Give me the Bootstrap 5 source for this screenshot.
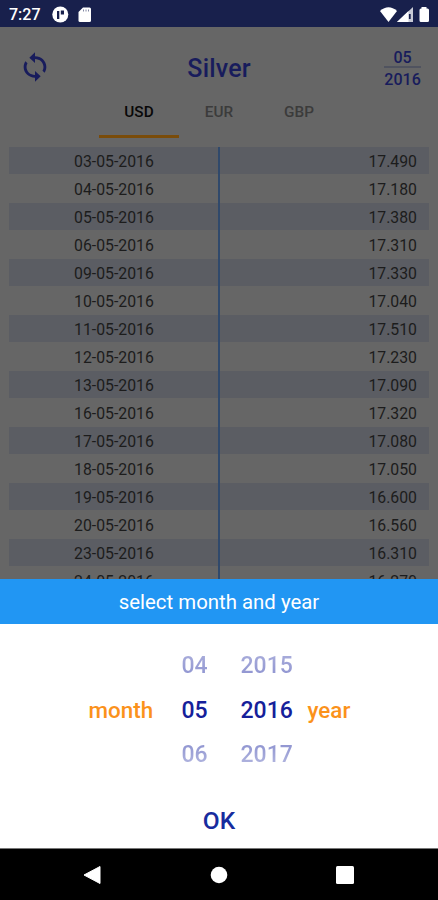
<!DOCTYPE html>
<html lang="en">
<head>
<meta charset="utf-8">
<meta name="viewport" content="width=device-width, initial-scale=1">
<title>Silver</title>
<link href="https://cdn.jsdelivr.net/npm/bootstrap@5.3.0/dist/css/bootstrap.min.css" rel="stylesheet">
<style>
body{font-family:Roboto,sans-serif;background:#666;height:900px;width:438px;line-height:1;color:#1c1c1c}
svg{display:block;flex:none}
.statusbar{height:27px;background:#18204c;color:#fff;font-size:16px;font-weight:500;padding:2px 8px 0 9px}
.statusbar .clock{width:43px}
.appbar{height:75px;padding:8px 17px 0 18px;color:#181c5c}
.side{width:40px}
.app-title{font-size:25px;font-weight:500;letter-spacing:.2px;padding:21px 4px 0 0}
.period{font-size:16px;font-weight:500;letter-spacing:.1px;padding-top:14px}
.period .top-part{border-bottom:2px solid #50535f;height:19px;line-height:17px}
.period .low-part{height:22px;line-height:24px}
.tabs{height:36px;padding-left:99px}
.tab-item{width:80px;font-size:15.3px;font-weight:500;color:#3b3b3b;line-height:21px;border-bottom:3px solid transparent}
.tab-item.current{color:#080808;border-color:#7a4c0a}
.rates{height:441px;padding:9px 9px 0}
.rate{height:28px;font-size:15.8px;line-height:29px}
.rate:nth-child(odd){background:linear-gradient(#5b5d63 27px,#666 27px)}
.rate .day{width:211px;border-right:2px solid #30496b;padding-left:1px}
.rate .price{padding-right:12px}
.sheet{height:269px}
.sheet-head{height:45px;background:#2196f3;font-size:20.4px;line-height:47px}
.picker{height:180px;font-size:23px;font-weight:500;color:#15209a;padding:19px 0 0 88.500px}
.picker .cap{color:#fb921b;font-size:22.4px}
.grid-pick{display:grid;grid-template-columns:93px 59px 67px 60px;grid-template-rows:45px 44px 45px;align-items:center}
.grid-pick .faded{color:transparent;background:linear-gradient(#a9addb,#8e93d0);-webkit-background-clip:text;background-clip:text}
.grid-pick .faded.below{background:linear-gradient(#8e93d0,#b4b8e0);-webkit-background-clip:text;background-clip:text}
.ok{height:44px;color:#172c9e;font-size:24.5px;font-weight:500;padding-top:5px}
.navkeys{height:52px;border-top:1px solid #777;padding:0 84px 0 83px}
</style>
</head>
<body class="d-flex flex-column overflow-hidden m-0">
<header class="statusbar d-flex align-items-center flex-shrink-0">
  <span class="clock">7:27</span>
  <svg width="18" height="18" viewBox="0 0 18 18"><circle cx="8.3" cy="8.500" r="8" fill="#fff"/><path d="M5 5H7.300V13H5z" fill="#18204c"/><path d="M8.800 4.500H12V8.500H8.800z" fill="#18204c"/></svg>
  <svg class="ms-2" width="14" height="17" viewBox="0 0 14 17"><path d="M5 1.500h6.500Q13 1.500 13 3V14.500Q13 16 11.500 16H2Q.5 16 .5 14.500V6z" fill="#fff"/><path d="M5.500 3.500v2M8 3.500v2M10.500 3.500v2" stroke="#8388a4"/></svg>
  <svg class="ms-auto" width="51" height="18" viewBox="0 0 51 18"><path d="M1 5Q9.500 -2.500 18 5L9.500 16z" fill="#fff"/><path d="M34 1V16H18z" fill="#c9cbd6"/><path d="M18 16L29.500 5V16z" fill="#fff"/><path d="M30.800 8v5" stroke="#18204c" stroke-width="1.800"/><path d="M42.500 1h5v1.500h1Q50 2.500 50 4V14.500Q50 16 48.500 16H42Q40.500 16 40.500 14.500V4Q40.500 2.500 42 2.500h.5z" fill="#fff"/></svg>
</header>
<section class="appbar d-flex justify-content-between flex-shrink-0">
  <div class="side pt-3"><svg width="34" height="32" viewBox="0 0 24 24" preserveAspectRatio="none" fill="#181c5c"><path d="M12 4V1L8 5l4 4V6c3.310 0 6 2.690 6 6 0 1.010-.25 1.970-.7 2.800l1.460 1.460C19.540 15.030 20 13.570 20 12c0-4.420-3.580-8-8-8zm0 14c-3.310 0-6-2.690-6-6 0-1.010.25-1.970.7-2.800L5.240 7.740C4.460 8.970 4 10.430 4 12c0 4.420 3.580 8 8 8v3l4-4-4-4v3z"/></svg></div>
  <div class="app-title">Silver</div>
  <div class="period text-center"><div class="top-part">05</div><div class="low-part">2016</div></div>
</section>
<nav class="tabs d-flex flex-shrink-0 text-center">
  <div class="tab-item current">USD</div><div class="tab-item">EUR</div><div class="tab-item">GBP</div>
</nav>
<main class="rates overflow-hidden flex-shrink-0">
<div class="rate d-flex"><div class="day text-center">03-05-2016</div><div class="price flex-fill text-end">17.490</div></div>
<div class="rate d-flex"><div class="day text-center">04-05-2016</div><div class="price flex-fill text-end">17.180</div></div>
<div class="rate d-flex"><div class="day text-center">05-05-2016</div><div class="price flex-fill text-end">17.380</div></div>
<div class="rate d-flex"><div class="day text-center">06-05-2016</div><div class="price flex-fill text-end">17.310</div></div>
<div class="rate d-flex"><div class="day text-center">09-05-2016</div><div class="price flex-fill text-end">17.330</div></div>
<div class="rate d-flex"><div class="day text-center">10-05-2016</div><div class="price flex-fill text-end">17.040</div></div>
<div class="rate d-flex"><div class="day text-center">11-05-2016</div><div class="price flex-fill text-end">17.510</div></div>
<div class="rate d-flex"><div class="day text-center">12-05-2016</div><div class="price flex-fill text-end">17.230</div></div>
<div class="rate d-flex"><div class="day text-center">13-05-2016</div><div class="price flex-fill text-end">17.090</div></div>
<div class="rate d-flex"><div class="day text-center">16-05-2016</div><div class="price flex-fill text-end">17.320</div></div>
<div class="rate d-flex"><div class="day text-center">17-05-2016</div><div class="price flex-fill text-end">17.080</div></div>
<div class="rate d-flex"><div class="day text-center">18-05-2016</div><div class="price flex-fill text-end">17.050</div></div>
<div class="rate d-flex"><div class="day text-center">19-05-2016</div><div class="price flex-fill text-end">16.600</div></div>
<div class="rate d-flex"><div class="day text-center">20-05-2016</div><div class="price flex-fill text-end">16.560</div></div>
<div class="rate d-flex"><div class="day text-center">23-05-2016</div><div class="price flex-fill text-end">16.310</div></div>
<div class="rate d-flex"><div class="day text-center">24-05-2016</div><div class="price flex-fill text-end">16.270</div></div>
</main>
<section class="sheet bg-white flex-shrink-0">
  <div class="sheet-head text-white text-center">select month and year</div>
  <div class="picker"><div class="grid-pick">
    <span></span><span class="faded">04</span><span class="faded">2015</span><span></span>
    <span class="cap">month</span><span>05</span><span>2016</span><span class="cap">year</span>
    <span></span><span class="faded below">06</span><span class="faded below">2017</span><span></span>
  </div></div>
  <div class="ok text-center">OK</div>
</section>
<footer class="navkeys bg-black d-flex justify-content-between align-items-center flex-shrink-0">
  <svg width="18" height="20" viewBox="0 0 18 20"><path d="M17 1.500V18.500L1 10z" fill="#fff" stroke="#fff" stroke-linejoin="round"/></svg>
  <svg width="18" height="18" viewBox="0 0 18 18"><circle cx="9" cy="9" r="8.300" fill="#fff"/></svg>
  <svg width="18" height="18" viewBox="0 0 18 18"><rect width="18" height="18" rx="1.500" fill="#fff"/></svg>
</footer>
<script src="https://cdn.jsdelivr.net/npm/bootstrap@5.3.0/dist/js/bootstrap.bundle.min.js"></script>
</body>
</html>
